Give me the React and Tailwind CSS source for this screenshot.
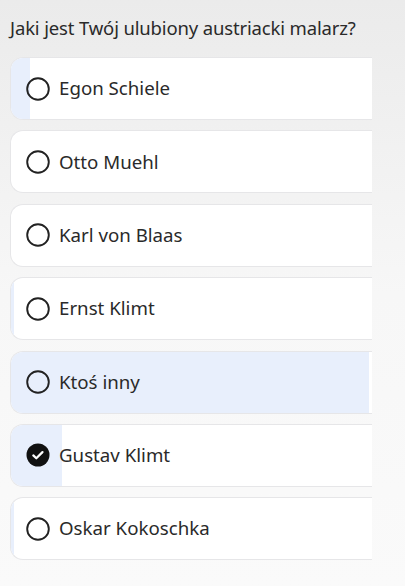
import { useState } from "react";

const options = [
  { name: "Egon Schiele", fill: 19 },
  { name: "Otto Muehl", fill: 0 },
  { name: "Karl von Blaas", fill: 0 },
  { name: "Ernst Klimt", fill: 3 },
  { name: "Ktoś inny", fill: 358 },
  { name: "Gustav Klimt", fill: 51 },
  { name: "Oskar Kokoschka", fill: 3 },
];

function Radio({ checked }) {
  if (checked) {
    return (
      <svg width="24" height="24" viewBox="0 0 24 24" className="shrink-0">
        <circle cx="12" cy="12" r="11.5" fill="#111" />
        <path
          d="M7.3 12.4l3 2.9 6.2-6.2"
          fill="none"
          stroke="#fff"
          strokeWidth="2.2"
          strokeLinecap="round"
          strokeLinejoin="round"
        />
      </svg>
    );
  }
  return (
    <svg width="24" height="24" viewBox="0 0 24 24" className="shrink-0">
      <circle cx="12" cy="12" r="10.8" fill="none" stroke="#222" strokeWidth="1.9" />
    </svg>
  );
}

export default function App() {
  const [selected] = useState(5);

  return (
    <div
      className="w-[405px] h-[586px] overflow-hidden bg-gradient-to-b from-[#ebebeb] via-[#f7f7f7] to-[#fafafa] text-[#2a2a2a]"
      style={{ fontFamily: '"Noto Sans", "Open Sans", sans-serif' }}
    >
      <h1 className="pl-[10px] pt-[17px] text-[18.5px] leading-[21px] tracking-[-0.15px]">
        Jaki jest Twój ulubiony austriacki malarz?
      </h1>

      <div className="mt-[19px] w-[372px] pl-[10px] flex flex-col gap-[10.4px]">
        {options.map((opt, i) => (
          <div
            key={opt.name}
            className="relative h-[63px] rounded-l-[13px] border border-r-0 border-[#e6e6e8] bg-white overflow-hidden flex items-center"
          >
            {opt.fill > 0 && (
              <div
                className="absolute inset-y-0 left-0 bg-[#e8effc]"
                style={{ width: opt.fill }}
              />
            )}
            <div className="relative flex items-center gap-[9px] pl-[15px]">
              <Radio checked={i === selected} />
              <span className="text-[18.7px] leading-none">{opt.name}</span>
            </div>
          </div>
        ))}
      </div>
    </div>
  );
}
